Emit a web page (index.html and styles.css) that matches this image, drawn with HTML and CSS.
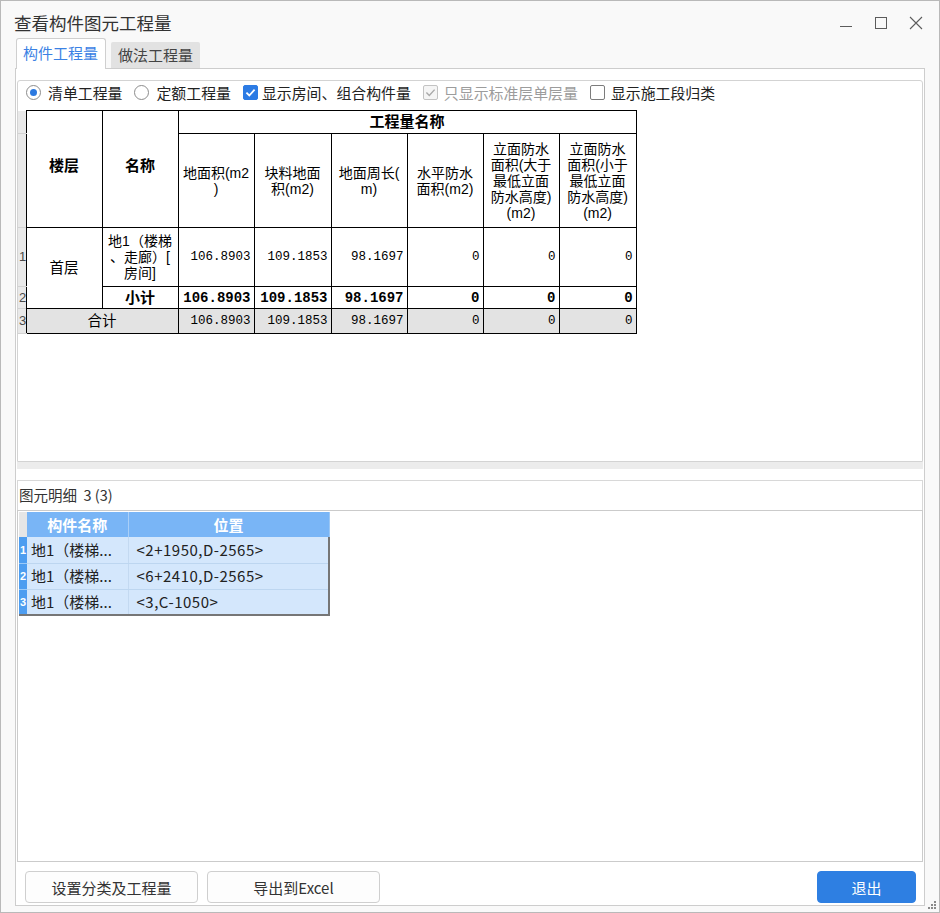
FILE: index.html
```html
<!DOCTYPE html>
<html lang="zh-CN">
<head>
<meta charset="utf-8">
<title>查看构件图元工程量</title>
<link rel="stylesheet" href="styles.css">
</head>
<body>
<div class="window">
  <div class="titlebar">
    <div class="title">查看构件图元工程量</div>
    <div class="controls">
      <span class="ctl"><svg width="14" height="14" viewBox="0 0 14 14"><path d="M1 10.5H13" stroke="#5c5c5c" stroke-width="1" fill="none"/></svg></span>
      <span class="ctl"><svg width="14" height="14" viewBox="0 0 14 14"><rect x="1.5" y="1.5" width="11" height="11" stroke="#5c5c5c" stroke-width="1" fill="none"/></svg></span>
      <span class="ctl"><svg width="14" height="14" viewBox="0 0 14 14"><path d="M1 1L13 13M13 1L1 13" stroke="#5c5c5c" stroke-width="1.1" fill="none"/></svg></span>
    </div>
  </div>

  <div class="tabstrip">
    <div class="tab active">构件工程量</div>
    <div class="tab">做法工程量</div>
  </div>

  <div class="tabpanel">
    <div class="upper">
      <div class="options">
        <label class="opt o-radio1"><span class="radio on"></span>清单工程量</label>
        <label class="opt o-radio2"><span class="radio"></span>定额工程量</label>
        <label class="opt o-tight"><span class="check on"><svg width="13" height="13" viewBox="0 0 13 13"><path d="M2.4 6.6L5.3 9.5L10.6 3.6" stroke="#fff" stroke-width="1.8" fill="none"/></svg></span>显示房间、组合构件量</label>
        <label class="opt dis"><span class="check dis"><svg width="13" height="13" viewBox="0 0 13 13"><path d="M2.4 6.6L5.3 9.5L10.6 3.6" stroke="#a9a9a9" stroke-width="1.4" fill="none"/></svg></span>只显示标准层单层量</label>
        <label class="opt"><span class="check"></span>显示施工段归类</label>
      </div>

      <table class="qty">
        <colgroup>
          <col class="c-rh"><col class="c76"><col class="c76"><col class="c76"><col class="c77"><col class="c76"><col class="c76"><col class="c76"><col class="c77">
        </colgroup>
        <tr class="h1">
          <td class="rh"></td>
          <th rowspan="2" class="b hb">楼层</th>
          <th rowspan="2" class="b hb">名称</th>
          <th colspan="6" class="b">工程量名称</th>
        </tr>
        <tr class="h2">
          <td class="rh"></td>
          <th>地面积(m2<br>)</th>
          <th>块料地面<br>积(m2)</th>
          <th>地面周长(<br>m)</th>
          <th>水平防水<br>面积(m2)</th>
          <th>立面防水<br>面积(大于<br>最低立面<br>防水高度)<br>(m2)</th>
          <th>立面防水<br>面积(小于<br>最低立面<br>防水高度)<br>(m2)</th>
        </tr>
        <tr class="r1">
          <td class="rh">1</td>
          <td rowspan="2">首层</td>
          <td class="nm">地1（楼梯<br>、走廊）[<br>房间]</td>
          <td class="n">106.8903</td>
          <td class="n">109.1853</td>
          <td class="n">98.1697</td>
          <td class="n">0</td>
          <td class="n">0</td>
          <td class="n">0</td>
        </tr>
        <tr class="r2">
          <td class="rh">2</td>
          <td class="b">小计</td>
          <td class="n nb">106.8903</td>
          <td class="n nb">109.1853</td>
          <td class="n nb">98.1697</td>
          <td class="n nb">0</td>
          <td class="n nb">0</td>
          <td class="n nb">0</td>
        </tr>
        <tr class="r3">
          <td class="rh">3</td>
          <td colspan="2">合计</td>
          <td class="n">106.8903</td>
          <td class="n">109.1853</td>
          <td class="n">98.1697</td>
          <td class="n">0</td>
          <td class="n">0</td>
          <td class="n">0</td>
        </tr>
      </table>
    </div>

    <div class="splitter"></div>
    <div class="gap"></div>

    <div class="detail-head">图元明细&nbsp;&nbsp;3 (3)</div>
    <div class="detail-body">
      <table class="grid">
        <colgroup><col class="g-rh"><col class="g-name"><col class="g-pos"></colgroup>
        <tr class="gh">
          <th class="corner"></th>
          <th>构件名称</th>
          <th class="last">位置</th>
        </tr>
        <tr>
          <td class="rn">1</td>
          <td class="name">地1（楼梯...</td>
          <td class="pos">&lt;2+1950,D-2565&gt;</td>
        </tr>
        <tr>
          <td class="rn">2</td>
          <td class="name">地1（楼梯...</td>
          <td class="pos">&lt;6+2410,D-2565&gt;</td>
        </tr>
        <tr class="lastrow">
          <td class="rn">3</td>
          <td class="name">地1（楼梯...</td>
          <td class="pos">&lt;3,C-1050&gt;</td>
        </tr>
      </table>
    </div>

    <div class="buttons">
      <button class="btn wide">设置分类及工程量</button>
      <button class="btn wide">导出到Excel</button>
      <button class="btn primary">退出</button>
    </div>
  </div>

  <svg class="grip" width="10" height="10" viewBox="0 0 10 10">
    <rect x="7" y="1" width="2" height="2" fill="#8a8a8a"/>
    <rect x="4" y="4" width="2" height="2" fill="#8a8a8a"/>
    <rect x="7" y="4" width="2" height="2" fill="#8a8a8a"/>
    <rect x="1" y="7" width="2" height="2" fill="#8a8a8a"/>
    <rect x="4" y="7" width="2" height="2" fill="#8a8a8a"/>
    <rect x="7" y="7" width="2" height="2" fill="#8a8a8a"/>
  </svg>
</div>
</body>
</html>
```

FILE: styles.css
```css
* { box-sizing: border-box; }

html, body {
  margin: 0;
  padding: 0;
  background: #f4f4f4;
}

body {
  font-family: "Noto Sans CJK SC", "Noto Sans", sans-serif;
  color: #222;
}

.window {
  position: relative;
  width: 940px;
  height: 913px;
  border: 1px solid #b9b9b9;
  background: #f9f9f9;
  display: flex;
  flex-direction: column;
}

/* title bar */
.titlebar {
  height: 37px;
  padding: 10px 6px 0 13px;
  display: flex;
  align-items: flex-start;
  flex: none;
}
.title {
  font-size: 17.5px;
  line-height: 24px;
  color: #333;
}
.controls {
  margin-left: auto;
  display: flex;
}
.ctl {
  width: 35px;
  height: 24px;
  display: flex;
  align-items: center;
  justify-content: center;
}

/* tabs */
.tabstrip {
  height: 31px;
  margin-bottom: -1px;
  padding-left: 15px;
  display: flex;
  align-items: flex-end;
  gap: 5px;
  position: relative;
  z-index: 2;
  flex: none;
}
.tab {
  font-size: 15px;
  line-height: 25px;
  padding: 0 7px;
  color: #444;
  background: #e2e2e2;
  height: 26px;
  margin-bottom: 1px;
  white-space: nowrap;
  border-radius: 2px 2px 0 0;
}
.tab.active {
  width: 90px;
  height: 31px;
  margin-bottom: 0;
  background: #fff;
  color: #3b82e4;
  border: 1px solid #cfcfcf;
  border-bottom: none;
  border-radius: 3px 3px 0 0;
  line-height: 28px;
  padding: 0 6px;
}

.tabpanel {
  margin-left: 14px;
  width: 910px;
  height: 838px;
  border: 1px solid #cdcdcd;
  background: #fff;
  padding: 11px 1px 0;
  display: flex;
  flex-direction: column;
  position: relative;
  z-index: 1;
}

/* upper panel */
.upper {
  height: 382px;
  border: 1px solid #d3d3d3;
  border-radius: 3px 3px 0 0;
  background: #fff;
  flex: none;
}

.options {
  height: 29px;
  padding: 3px 0 0 8px;
  display: flex;
  align-items: flex-start;
  gap: 12px;
  font-size: 14.9px;
  line-height: 17px;
  color: #222;
}
.opt {
  display: flex;
  align-items: center;
  gap: 6px;
  white-space: nowrap;
}
.opt.o-radio1 { gap: 7px; }
.opt.o-radio2 { gap: 7px; }
.opt.o-tight { gap: 4px; }
.opt.dis { color: #9c9c9c; }
.radio {
  width: 15px;
  height: 15px;
  border: 1px solid #8c8c8c;
  border-radius: 50%;
  background: #fff;
  display: flex;
  align-items: center;
  justify-content: center;
}
.radio.on::after {
  content: "";
  width: 7px;
  height: 7px;
  border-radius: 50%;
  background: #2b79e0;
}
.check {
  width: 15px;
  height: 15px;
  border: 1px solid #7c7c7c;
  border-radius: 2px;
  background: #fff;
  display: flex;
  align-items: center;
  justify-content: center;
}
.check svg { display: block; }
.check.on {
  background: #2c7be4;
  border-color: #2c7be4;
}
.check.dis {
  border-color: #c3c3c3;
  background: #f5f5f5;
}

/* quantity table */
.qty {
  border-collapse: collapse;
  table-layout: fixed;
  width: 618px;
  font-family: "Liberation Sans", "Noto Sans CJK SC", sans-serif;
  font-size: 14px;
  line-height: 16px;
  color: #000;
}
.c-rh { width: 8px; }
.c76 { width: 76px; }
.c77 { width: 77px; }
.qty th, .qty td {
  border: 1px solid #000;
  padding: 0;
  text-align: center;
  vertical-align: middle;
  font-weight: normal;
  overflow: hidden;
}
.qty th { font-size: 14px; }
.qty td { font-size: 14.5px; }
.qty td.nm { line-height: 16px; font-size: 14px; }
.qty .b { font-weight: bold; font-size: 15px; }
.qty th.hb { padding-bottom: 6px; }
.qty .h1 { height: 23px; }
.qty .h2 { height: 94px; }
.qty .r1 { height: 59px; }
.qty .r2 { height: 22px; }
.qty .r3 { height: 25px; }
.qty td.rh {
  border: none;
  border-right: 1px solid #000;
  border-bottom: 1px solid #d2d2d2;
  background: #e9e9e9;
  text-align: left;
  font-family: "Liberation Sans", sans-serif;
  font-size: 13px;
  color: #4a4a4a;
  padding-left: 1px;
}
.qty .r3 td { background: #e3e3e3; }
.qty .r3 td.rh { background: #e9e9e9; }
.qty td.n {
  text-align: right;
  padding-right: 3px;
  font-family: "Liberation Mono", monospace;
  font-size: 12.5px;
}
.qty td.nb {
  font-weight: bold;
  font-size: 14px;
}

.splitter {
  height: 7px;
  background: #ececec;
  flex: none;
}
.gap {
  height: 11px;
  flex: none;
}

/* detail */
.detail-head {
  height: 30px;
  border: 1px solid #d8d8d8;
  border-bottom: none;
  padding-left: 1px;
  font-size: 14.5px;
  line-height: 27px;
  color: #333;
  flex: none;
}
.detail-body {
  height: 352px;
  border: 1px solid #cbcbcb;
  padding: 1px;
  background: #fff;
  flex: none;
}
.grid {
  border-collapse: collapse;
  table-layout: fixed;
  width: 310px;
  font-size: 15px;
  line-height: 20px;
}
.g-rh { width: 8px; }
.g-name { width: 101px; }
.g-pos { width: 201px; }
.grid .gh { height: 25px; }
.grid th {
  background: #79b5f6;
  color: #fff;
  font-weight: bold;
  font-size: 15px;
  border-right: 1px solid #a9cff8;
  padding: 0;
  text-align: center;
}
.grid th.corner {
  background: #e6e6e6;
  border-right: none;
}
.grid th.last { border-right: 1px solid #9cc7f4; }
.grid tr { height: 26px; }
.grid td {
  background: #d4e7fc;
  color: #222;
  border-bottom: 1px solid #bdd6f0;
  border-right: 1px solid #c3d9f1;
  white-space: nowrap;
  overflow: hidden;
  padding: 0;
}
.grid td.rn {
  background: #4d9df0;
  color: #fff;
  font-family: "Liberation Sans", sans-serif;
  font-weight: bold;
  font-size: 11px;
  border-right: none;
  border-bottom: 1px solid #9ccaf7;
  padding-left: 1px;
}
.grid td.name { padding-left: 4px; }
.grid td.pos {
  padding-left: 8px;
  letter-spacing: 0.5px;
  border-right: 2px solid #767676;
}
.grid .lastrow td { border-bottom: 2px solid #767676; }
.grid .lastrow td.rn { border-bottom: 2px solid #767676; }

/* buttons */
.buttons {
  flex: 1;
  display: flex;
  align-items: flex-start;
  padding: 9px 7px 0 8px;
  gap: 9px;
}
.btn {
  height: 32px;
  font-family: "Noto Sans CJK SC", sans-serif;
  font-size: 15px;
  color: #333;
  background: #fdfdfd;
  border: 1px solid #cfcfcf;
  border-radius: 4px;
  padding: 0;
}
.btn.wide { width: 173px; }
.btn.primary {
  margin-left: auto;
  width: 99px;
  background: #2e7fe2;
  border-color: #2e7fe2;
  color: #fff;
}

.grip {
  position: absolute;
  right: 2px;
  bottom: 2px;
}
```
